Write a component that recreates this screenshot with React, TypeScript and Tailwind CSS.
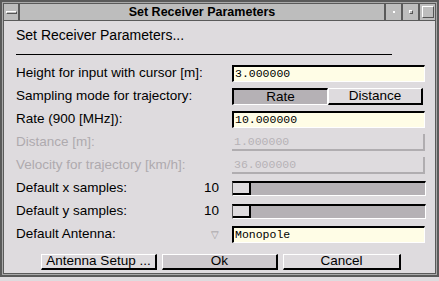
import React from "react";

const font = { fontFamily: '"Liberation Sans", Arial, sans-serif' };
const mono = { fontFamily: '"Liberation Mono", "DejaVu Sans Mono", monospace' };

function Label({ children, disabled, value }: { children: React.ReactNode; disabled?: boolean; value?: string }) {
  return (
    <div className={`flex w-[203px] items-center justify-between text-[13.5px] ${disabled ? "text-[#aeaaae]" : "text-black"}`}>
      <span>{children}</span>
      {value && <span>{value}</span>}
    </div>
  );
}

function Input({ value }: { value: string }) {
  return (
    <div className="flex h-[17px] w-[193px] items-center border-t-2 border-l-2 border-b border-r border-t-black border-l-black border-b-white border-r-white bg-[#fffde6] pl-[1px] text-[11.5px] leading-none text-black" style={mono}>
      {value}
    </div>
  );
}

function Disabled({ value }: { value: string }) {
  return (
    <div className="flex h-[17px] w-[193px] items-center border-b-2 border-r-2 border-b-[#b0adb0] border-r-[#b0adb0] pl-[2px] text-[11.5px] leading-none text-[#b6b2b6]" style={mono}>
      {value}
    </div>
  );
}

function Slider() {
  return (
    <div className="flex h-[15px] w-[194px] border-t-2 border-l border-b border-r border-t-black border-l-[#555] border-b-white border-r-white bg-[#b5b1b5]">
      <div className="h-full w-[18px] border-b-2 border-r-2 border-b-black border-r-black bg-[#dedbde]" />
    </div>
  );
}

function Row({ children }: { children: React.ReactNode }) {
  return <div className="flex h-[23px] items-center gap-[13px]">{children}</div>;
}

function Button({ children, w, bg }: { children: React.ReactNode; w: string; bg: string }) {
  return (
    <div className={`flex h-[16px] items-center justify-center border-t border-l border-b-2 border-r-2 border-t-white border-l-white border-b-black border-r-black text-[13.5px] text-black ${w} ${bg}`}>
      {children}
    </div>
  );
}

export default function App() {
  return (
    <div className="relative h-[281px] w-[439px] overflow-hidden bg-[#dedbde]" style={font}>
      <div className="flex h-[277px] w-[439px] flex-col border-2 border-[#5a5a5a] bg-[#a9a9a9] p-[1px]">
        <div className="flex flex-1 flex-col border border-[#5a5a5a] bg-[#dedbde]">
          {/* title bar */}
          <div className="flex h-[17px] border-b border-[#5a5a5a] bg-[#bdbdbd]">
            <div className="flex w-[16px] items-center justify-center border-r-2 border-[#5a5a5a]">
              <div className="h-[3px] w-[11px] border-t border-l border-b border-r border-t-white border-l-white border-b-[#555] border-r-[#555]" />
            </div>
            <div className="flex flex-1 items-center justify-center text-[12.5px] font-bold text-black">
              Set Receiver Parameters
            </div>
            <div className="flex w-[17px] items-center justify-center border-l-2 border-[#5a5a5a]">
              <div className="h-[2px] w-[2px] bg-white" />
            </div>
            <div className="flex w-[17px] items-center justify-center border-l-2 border-[#5a5a5a]">
              <div className="h-[4px] w-[4px] border-t border-l border-b border-r border-t-white border-l-white border-b-[#555] border-r-[#555]" />
            </div>
            <div className="flex w-[17px] items-center justify-center border-l-2 border-[#5a5a5a]">
              <div className="h-[12px] w-[12px] border-t border-l border-b border-r border-t-white border-l-white border-b-[#555] border-r-[#555]" />
            </div>
          </div>
          {/* content */}
          <div className="flex flex-col pl-[12px] pt-[4px]">
            <div className="h-[18px] text-[14px] leading-[20px] text-black">Set Receiver Parameters...</div>
            <div className="mt-[11px] h-px w-[376px] bg-black" />
            <div className="mt-[7px] flex flex-col">
              <Row>
                <Label>Height for input with cursor [m]:</Label>
                <Input value="3.000000" />
              </Row>
              <Row>
                <Label>Sampling mode for trajectory:</Label>
                <div className="flex">
                  <div className="flex h-[17px] w-[96px] items-center justify-center border-t-2 border-l-2 border-b border-r border-t-black border-l-black border-b-white border-r-white bg-[#b5b1b5] text-[13.5px]">
                    Rate
                  </div>
                  <div className="flex h-[17px] w-[95px] items-center justify-center border-t border-l border-b-2 border-r-2 border-t-white border-l-white border-b-black border-r-black text-[13.5px]">
                    Distance
                  </div>
                </div>
              </Row>
              <Row>
                <Label>Rate (900 [MHz]):</Label>
                <Input value="10.000000" />
              </Row>
              <Row>
                <Label disabled>Distance [m]:</Label>
                <Disabled value="1.000000" />
              </Row>
              <Row>
                <Label disabled>Velocity for trajectory [km/h]:</Label>
                <Disabled value="36.000000" />
              </Row>
              <Row>
                <Label value="10">Default x samples:</Label>
                <Slider />
              </Row>
              <Row>
                <Label value="10">Default y samples:</Label>
                <Slider />
              </Row>
              <Row>
                <div className="flex w-[203px] items-center justify-between text-[13.5px] text-black">
                  <span>Default Antenna:</span>
                  <span className="text-[10px] text-[#9a979a]">▽</span>
                </div>
                <Input value="Monopole" />
              </Row>
            </div>
            <div className="mt-[8px] ml-[25px] flex gap-[5px]">
              <Button w="w-[116px]" bg="bg-[#dedbde]">Antenna Setup ...</Button>
              <Button w="w-[116px]" bg="bg-[#cdc9cd]">Ok</Button>
              <Button w="w-[118px]" bg="bg-[#dedbde]">Cancel</Button>
            </div>
          </div>
        </div>
      </div>
    </div>
  );
}
